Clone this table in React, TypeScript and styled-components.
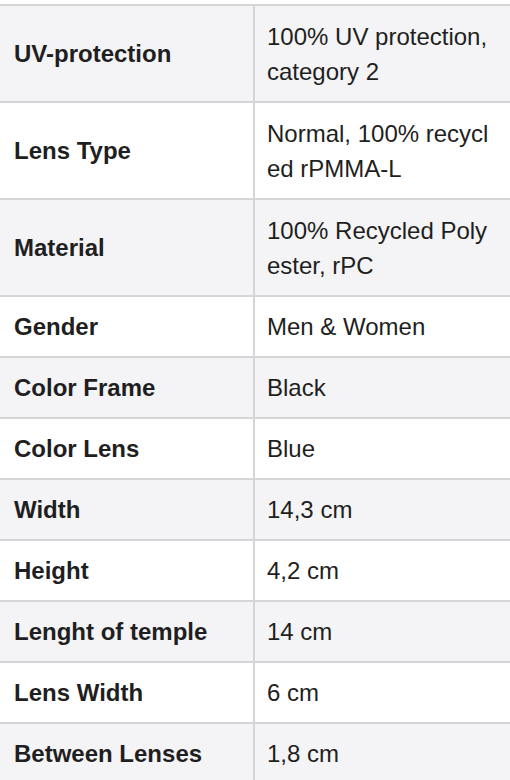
import { createGlobalStyle, styled } from "styled-components";

const GlobalStyle = createGlobalStyle`
  html, body {
    margin: 0;
    padding: 0;
    background-color: #ffffff;
  }
  body {
    font-family: "Liberation Sans", Arial, Helvetica, sans-serif;
    color: #1f1f21;
  }
`;

const Wrapper = styled.div`
  width: 510px;
  padding-top: 4px;
  overflow: hidden;
`;

const SpecTable = styled.table`
  width: 510px;
  border-collapse: collapse;
  table-layout: fixed;
  font-size: 24px;
  line-height: 35px;
`;

const LabelCol = styled.col`
  width: 254px;
`;

const Row = styled.tr<{ $shaded: boolean; $tall: boolean }>`
  background-color: ${(props) => (props.$shaded ? "#f4f4f6" : "#ffffff")};
  border-top: 2px solid #d5d5d8;
  border-bottom: 2px solid #d5d5d8;
  height: ${(props) => (props.$tall ? "97px" : "61px")};
`;

const Label = styled.th`
  padding: 12px 14px;
  text-align: left;
  vertical-align: middle;
  font-weight: 700;
  border-right: 2px solid #d5d5d8;
`;

const Value = styled.td`
  padding: 12px 15px 12px 12px;
  vertical-align: middle;
  font-weight: 400;
  word-break: break-all;
`;

const specs = [
  { label: "UV-protection", value: "100% UV protection, category 2", tall: true },
  { label: "Lens Type", value: "Normal, 100% recycled rPMMA-L", tall: true },
  { label: "Material", value: "100% Recycled Polyester, rPC", tall: true },
  { label: "Gender", value: "Men & Women" },
  { label: "Color Frame", value: "Black" },
  { label: "Color Lens", value: "Blue" },
  { label: "Width", value: "14,3 cm" },
  { label: "Height", value: "4,2 cm" },
  { label: "Lenght of temple", value: "14 cm" },
  { label: "Lens Width", value: "6 cm" },
  { label: "Between Lenses", value: "1,8 cm" },
];

function App() {
  return (
    <Wrapper>
      <GlobalStyle />
      <SpecTable>
        <colgroup>
          <LabelCol />
          <col />
        </colgroup>
        <tbody>
          {specs.map((spec, i) => (
            <Row key={spec.label} $shaded={i % 2 === 0} $tall={!!spec.tall}>
              <Label>{spec.label}</Label>
              <Value>{spec.value}</Value>
            </Row>
          ))}
        </tbody>
      </SpecTable>
    </Wrapper>
  );
}

export default App;
